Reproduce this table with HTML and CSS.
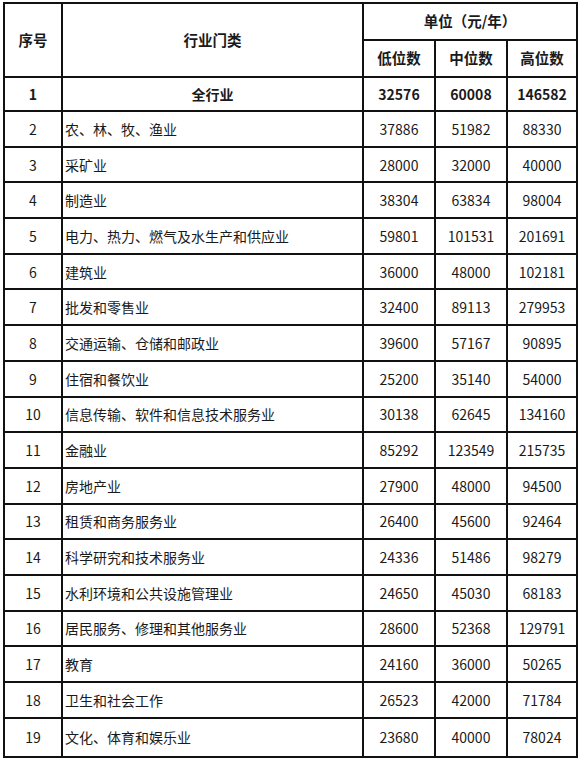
FILE: index.html
```html
<!DOCTYPE html>
<html lang="zh">
<head>
<meta charset="utf-8">
<link rel="stylesheet" href="styles.css">
</head>
<body>
<table class="wage">
<colgroup>
<col class="c-no"><col class="c-name"><col class="c-num"><col class="c-num"><col class="c-hi">
</colgroup>
<thead>
<tr class="h1">
<th rowspan="2">序号</th>
<th rowspan="2">行业门类</th>
<th colspan="3">单位（元/年）</th>
</tr>
<tr class="h2">
<th>低位数</th><th>中位数</th><th>高位数</th>
</tr>
</thead>
<tbody>
<tr class="total"><td>1</td><td class="center">全行业</td><td>32576</td><td>60008</td><td>146582</td></tr>
<tr><td>2</td><td class="name">农、林、牧、渔业</td><td>37886</td><td>51982</td><td>88330</td></tr>
<tr><td>3</td><td class="name">采矿业</td><td>28000</td><td>32000</td><td>40000</td></tr>
<tr><td>4</td><td class="name">制造业</td><td>38304</td><td>63834</td><td>98004</td></tr>
<tr><td>5</td><td class="name">电力、热力、燃气及水生产和供应业</td><td>59801</td><td>101531</td><td>201691</td></tr>
<tr><td>6</td><td class="name">建筑业</td><td>36000</td><td>48000</td><td>102181</td></tr>
<tr><td>7</td><td class="name">批发和零售业</td><td>32400</td><td>89113</td><td>279953</td></tr>
<tr><td>8</td><td class="name">交通运输、仓储和邮政业</td><td>39600</td><td>57167</td><td>90895</td></tr>
<tr><td>9</td><td class="name">住宿和餐饮业</td><td>25200</td><td>35140</td><td>54000</td></tr>
<tr><td>10</td><td class="name">信息传输、软件和信息技术服务业</td><td>30138</td><td>62645</td><td>134160</td></tr>
<tr><td>11</td><td class="name">金融业</td><td>85292</td><td>123549</td><td>215735</td></tr>
<tr><td>12</td><td class="name">房地产业</td><td>27900</td><td>48000</td><td>94500</td></tr>
<tr><td>13</td><td class="name">租赁和商务服务业</td><td>26400</td><td>45600</td><td>92464</td></tr>
<tr><td>14</td><td class="name">科学研究和技术服务业</td><td>24336</td><td>51486</td><td>98279</td></tr>
<tr><td>15</td><td class="name">水利环境和公共设施管理业</td><td>24650</td><td>45030</td><td>68183</td></tr>
<tr><td>16</td><td class="name">居民服务、修理和其他服务业</td><td>28600</td><td>52368</td><td>129791</td></tr>
<tr><td>17</td><td class="name">教育</td><td>24160</td><td>36000</td><td>50265</td></tr>
<tr><td>18</td><td class="name">卫生和社会工作</td><td>26523</td><td>42000</td><td>71784</td></tr>
<tr class="last"><td>19</td><td class="name">文化、体育和娱乐业</td><td>23680</td><td>40000</td><td>78024</td></tr>
</tbody>
</table>
</body>
</html>
```
FILE: styles.css
```css
html, body {
  margin: 0;
  padding: 0;
  background: #ffffff;
}
body {
  padding: 2px 0 0 3px;
  font-family: "Noto Sans CJK SC", "Liberation Sans", sans-serif;
  color: #1a1a1a;
}
.wage {
  border-collapse: collapse;
  table-layout: fixed;
  width: 573px;
  font-size: 14px;
}
.c-no { width: 58px; }
.c-name { width: 301px; }
.c-num { width: 72px; }
.c-hi { width: 70px; }
.wage th, .wage td {
  border: 2px solid #111;
  padding: 0;
  text-align: center;
  vertical-align: middle;
  line-height: 1;
  white-space: nowrap;
  overflow: hidden;
}
.wage th {
  font-weight: bold;
  font-size: 14.5px;
}
.h1 { height: 37px; }
.h2 { height: 37px; }
.wage tbody tr { height: 35.7px; }
.wage tbody tr.total { height: 34px; font-weight: bold; }
.wage tbody tr.last { height: 39px; }
.wage td.name {
  text-align: left;
  padding-left: 2px;
}
```
